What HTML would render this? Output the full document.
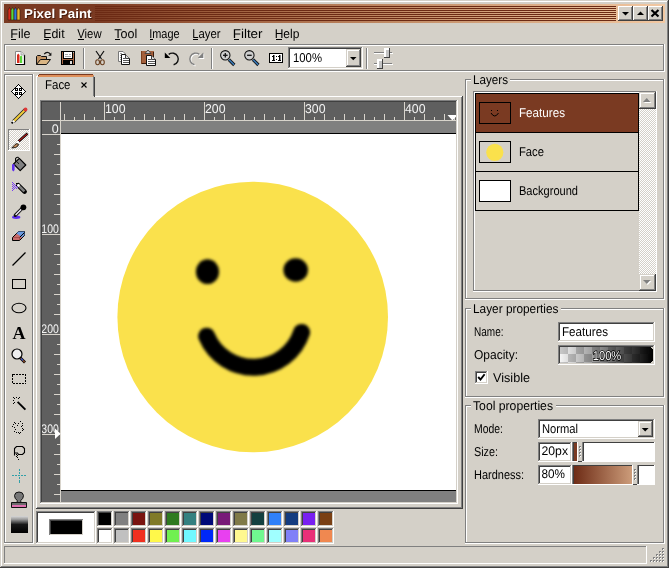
<!DOCTYPE html><html><head><meta charset="utf-8"><style>html,body{margin:0;padding:0;background:#d4d0c8;overflow:hidden}svg{display:block;will-change:transform} rect{shape-rendering:crispEdges}</style></head><body><svg width="669" height="568" viewBox="0 0 669 568" text-rendering="geometricPrecision"><rect x="0" y="0" width="669" height="568" fill="#d4d0c8" />
<rect x="0" y="0" width="668" height="1" fill="#d4d0c8" />
<rect x="0" y="0" width="1" height="567" fill="#d4d0c8" />
<rect x="1" y="1" width="666" height="1" fill="#ffffff" />
<rect x="1" y="1" width="1" height="565" fill="#ffffff" />
<rect x="0" y="567" width="669" height="1" fill="#404040" />
<rect x="668" y="0" width="1" height="568" fill="#404040" />
<rect x="1" y="566" width="667" height="1" fill="#808080" />
<rect x="667" y="1" width="1" height="566" fill="#808080" />
<defs><linearGradient id="tg" x1="0" x2="1" y1="0" y2="0"><stop offset="0" stop-color="#7a3a22"/><stop offset="0.14" stop-color="#7a3a22"/><stop offset="0.3" stop-color="#9a5a3a"/><stop offset="0.6" stop-color="#c28c66"/><stop offset="0.82" stop-color="#dcae88"/><stop offset="1" stop-color="#f2c8a2"/></linearGradient><linearGradient id="hg" x1="0" x2="1"><stop offset="0" stop-color="#6e2c16"/><stop offset="1" stop-color="#cc9c7a"/></linearGradient><linearGradient id="opg" x1="0" x2="1"><stop offset="0" stop-color="#000" stop-opacity="0"/><stop offset="1" stop-color="#000" stop-opacity="1"/></linearGradient><pattern id="dith" width="2" height="2" patternUnits="userSpaceOnUse"><rect width="2" height="2" fill="#d4d0c8"/><rect width="1" height="1" fill="#fff"/><rect x="1" y="1" width="1" height="1" fill="#fff"/></pattern><pattern id="chk" x="560" y="346" width="16" height="16" patternUnits="userSpaceOnUse"><rect width="16" height="16" fill="#f4f4f4"/><rect width="8" height="8" fill="#c8c8c8"/><rect x="8" y="8" width="8" height="8" fill="#c8c8c8"/></pattern><filter id="crisp" x="-5%" y="-20%" width="110%" height="140%"><feComponentTransfer><feFuncA type="discrete" tableValues="0 0 1 1 1"/></feComponentTransfer></filter><filter id="blur" x="-20%" y="-20%" width="140%" height="140%"><feGaussianBlur stdDeviation="1.35"/></filter><clipPath id="hr"><rect x="42" y="102" width="414" height="18"/></clipPath><clipPath id="vr"><rect x="42" y="121" width="18" height="381"/></clipPath></defs>
<rect x="4" y="4" width="661" height="19" fill="url(#tg)" />
<rect x="95" y="6" width="521" height="1" fill="#6c2a14" />
<rect x="95" y="8" width="521" height="1" fill="#6c2a14" />
<rect x="95" y="10" width="521" height="1" fill="#6c2a14" />
<rect x="95" y="12" width="521" height="1" fill="#6c2a14" />
<rect x="95" y="14" width="521" height="1" fill="#6c2a14" />
<rect x="95" y="16" width="521" height="1" fill="#6c2a14" />
<rect x="95" y="18" width="521" height="1" fill="#6c2a14" />
<rect x="95" y="20" width="521" height="1" fill="#6c2a14" />
<path d="M8 20 V10 L9.5 7.5 L11 10 V20 Z" fill="#d82a1c" stroke="#3a1a0a" stroke-width="0.6"/>
<path d="M11 20 V10 L12.5 7.5 L14 10 V20 Z" fill="#5ad83a" stroke="#3a1a0a" stroke-width="0.6"/>
<path d="M14 20 V10 L15.5 7.5 L17 10 V20 Z" fill="#2a7ae0" stroke="#3a1a0a" stroke-width="0.6"/>
<path d="M17 20 V10 L18.5 7.5 L20 10 V20 Z" fill="#e8b830" stroke="#3a1a0a" stroke-width="0.6"/>
<text x="25" y="19" font-family="Liberation Sans" font-size="12.8" font-weight="bold" fill="#3a1408" text-anchor="start" textLength="67.5" lengthAdjust="spacingAndGlyphs" opacity="0.8">Pixel Paint</text>
<text x="24" y="18" font-family="Liberation Sans" font-size="12.8" font-weight="bold" fill="#fff" text-anchor="start" textLength="67.5" lengthAdjust="spacingAndGlyphs" >Pixel Paint</text>
<rect x="618" y="6" width="15" height="15" fill="#d4d0c8" />
<rect x="618" y="6" width="15" height="1" fill="#ffffff" />
<rect x="618" y="6" width="1" height="15" fill="#ffffff" />
<rect x="618" y="20" width="15" height="1" fill="#404040" />
<rect x="632" y="6" width="1" height="15" fill="#404040" />
<rect x="619" y="7" width="13" height="1" fill="#ffffff" />
<rect x="619" y="7" width="1" height="13" fill="#ffffff" />
<rect x="619" y="19" width="13" height="1" fill="#808080" />
<rect x="631" y="7" width="1" height="13" fill="#808080" />
<rect x="619" y="7" width="13" height="1" fill="#d4d0c8" />
<rect x="619" y="7" width="1" height="13" fill="#d4d0c8" />
<rect x="619" y="19" width="13" height="1" fill="#808080" />
<rect x="631" y="7" width="1" height="13" fill="#808080" />
<rect x="633" y="6" width="15" height="15" fill="#d4d0c8" />
<rect x="633" y="6" width="15" height="1" fill="#ffffff" />
<rect x="633" y="6" width="1" height="15" fill="#ffffff" />
<rect x="633" y="20" width="15" height="1" fill="#404040" />
<rect x="647" y="6" width="1" height="15" fill="#404040" />
<rect x="634" y="7" width="13" height="1" fill="#ffffff" />
<rect x="634" y="7" width="1" height="13" fill="#ffffff" />
<rect x="634" y="19" width="13" height="1" fill="#808080" />
<rect x="646" y="7" width="1" height="13" fill="#808080" />
<rect x="634" y="7" width="13" height="1" fill="#d4d0c8" />
<rect x="634" y="7" width="1" height="13" fill="#d4d0c8" />
<rect x="634" y="19" width="13" height="1" fill="#808080" />
<rect x="646" y="7" width="1" height="13" fill="#808080" />
<rect x="648" y="6" width="15" height="15" fill="#d4d0c8" />
<rect x="648" y="6" width="15" height="1" fill="#ffffff" />
<rect x="648" y="6" width="1" height="15" fill="#ffffff" />
<rect x="648" y="20" width="15" height="1" fill="#404040" />
<rect x="662" y="6" width="1" height="15" fill="#404040" />
<rect x="649" y="7" width="13" height="1" fill="#ffffff" />
<rect x="649" y="7" width="1" height="13" fill="#ffffff" />
<rect x="649" y="19" width="13" height="1" fill="#808080" />
<rect x="661" y="7" width="1" height="13" fill="#808080" />
<rect x="649" y="7" width="13" height="1" fill="#d4d0c8" />
<rect x="649" y="7" width="1" height="13" fill="#d4d0c8" />
<rect x="649" y="19" width="13" height="1" fill="#808080" />
<rect x="661" y="7" width="1" height="13" fill="#808080" />
<path d="M622 12 H629 L625.5 15.5 Z" fill="#000"/>
<path d="M637 15 H644 L640.5 11.5 Z" fill="#000"/>
<path d="M651.5 10 L658.5 16.5 M658.5 10 L651.5 16.5" stroke="#000" stroke-width="2.2"/>
<text x="10.2" y="38" font-family="Liberation Sans" font-size="12.8" font-weight="normal" fill="#000" text-anchor="start" textLength="20.4" lengthAdjust="spacingAndGlyphs" >File</text>
<rect x="11" y="39" width="5" height="1" fill="#000" />
<text x="43.2" y="38" font-family="Liberation Sans" font-size="12.8" font-weight="normal" fill="#000" text-anchor="start" textLength="21.4" lengthAdjust="spacingAndGlyphs" >Edit</text>
<rect x="44" y="39" width="5" height="1" fill="#000" />
<text x="77.2" y="38" font-family="Liberation Sans" font-size="12.8" font-weight="normal" fill="#000" text-anchor="start" textLength="24.4" lengthAdjust="spacingAndGlyphs" >View</text>
<rect x="78" y="39" width="6" height="1" fill="#000" />
<text x="114.2" y="38" font-family="Liberation Sans" font-size="12.8" font-weight="normal" fill="#000" text-anchor="start" textLength="23.0" lengthAdjust="spacingAndGlyphs" >Tool</text>
<rect x="115" y="39" width="5" height="1" fill="#000" />
<text x="149.2" y="38" font-family="Liberation Sans" font-size="12.8" font-weight="normal" fill="#000" text-anchor="start" textLength="30.4" lengthAdjust="spacingAndGlyphs" >Image</text>
<rect x="150" y="39" width="3" height="1" fill="#000" />
<text x="192.2" y="38" font-family="Liberation Sans" font-size="12.8" font-weight="normal" fill="#000" text-anchor="start" textLength="28.4" lengthAdjust="spacingAndGlyphs" >Layer</text>
<rect x="193" y="39" width="5" height="1" fill="#000" />
<text x="232.7" y="38" font-family="Liberation Sans" font-size="12.8" font-weight="normal" fill="#000" text-anchor="start" textLength="29.9" lengthAdjust="spacingAndGlyphs" >Filter</text>
<rect x="234" y="39" width="5" height="1" fill="#000" />
<text x="274.7" y="38" font-family="Liberation Sans" font-size="12.8" font-weight="normal" fill="#000" text-anchor="start" textLength="24.7" lengthAdjust="spacingAndGlyphs" >Help</text>
<rect x="276" y="39" width="6" height="1" fill="#000" />
<rect x="4" y="44" width="661" height="1" fill="#808080" />
<rect x="4" y="44" width="1" height="28" fill="#808080" />
<rect x="4" y="71" width="661" height="1" fill="#ffffff" />
<rect x="664" y="44" width="1" height="28" fill="#ffffff" />
<rect x="5" y="45" width="659" height="1" fill="#ffffff" />
<rect x="5" y="45" width="1" height="26" fill="#ffffff" />
<rect x="5" y="70" width="659" height="1" fill="#808080" />
<rect x="663" y="45" width="1" height="26" fill="#808080" />
<rect x="83" y="48" width="1" height="21" fill="#808080" />
<rect x="84" y="48" width="1" height="21" fill="#ffffff" />
<rect x="211" y="48" width="1" height="21" fill="#808080" />
<rect x="212" y="48" width="1" height="21" fill="#ffffff" />
<rect x="366" y="48" width="1" height="21" fill="#808080" />
<rect x="367" y="48" width="1" height="21" fill="#ffffff" />
<path d="M15.5 51.5 H21 L24.5 55 V64.5 H15.5 Z" fill="#fff" stroke="#888" stroke-width="1"/>
<path d="M24.5 55 V64.5 H15.5" fill="none" stroke="#000" stroke-width="1.2"/>
<path d="M21 51.5 V55 H24.5" fill="#ddd" stroke="#999" stroke-width="0.8"/>
<path d="M17 63 V55 L18.2 53.5 L19.5 55 V63 Z" fill="#d82a1c"/>
<path d="M20 63 V56.5 L21 55.5 L22.2 56.5 V63 Z" fill="#5ad83a"/>
<path d="M36.5 64.5 V56.5 L37.5 55.5 H40.5 L41.5 56.5 H46.5 V59.5" fill="#c49464" stroke="#111" stroke-width="1"/>
<path d="M36.5 64.5 L40.5 59.5 H50.5 L46.5 64.5 Z" fill="#dab684" stroke="#111" stroke-width="1"/>
<path d="M44.2 54.2 Q47 50.8 50.2 53.8" fill="none" stroke="#111" stroke-width="1.2"/><path d="M48.2 55.8 H51.4 V52.4 Z" fill="#111"/>
<rect x="61" y="51" width="14" height="14" fill="#000" />
<rect x="64" y="52" width="8" height="6" fill="#fff" />
<rect x="65" y="54" width="3" height="1" fill="#aaa" />
<rect x="69" y="54" width="2" height="1" fill="#aaa" />
<rect x="65" y="56" width="6" height="1" fill="#aaa" />
<rect x="62" y="52" width="1" height="12" fill="#a86a48" />
<rect x="73" y="53" width="1" height="11" fill="#a86a48" />
<rect x="62" y="59" width="12" height="1" fill="#a86a48" />
<rect x="70" y="61" width="2" height="3" fill="#ddd" />
<rect x="73" y="52" width="1" height="1" fill="#bbb" />
<path d="M96 51 L101.5 59 M104 51 L98.5 59" stroke="#111" stroke-width="1.2"/>
<ellipse cx="97.6" cy="62.3" rx="1.9" ry="2.5" fill="none" stroke="#6a4020" stroke-width="1.1"/><ellipse cx="102.4" cy="62.3" rx="1.9" ry="2.5" fill="none" stroke="#6a4020" stroke-width="1.1"/>
<path d="M118.5 51.5 H123 L125.5 54 V61.5 H118.5 Z" fill="#fff" stroke="#777" stroke-width="1"/>
<rect x="120" y="53" width="2" height="1" fill="#999" />
<rect x="120" y="55" width="2" height="1" fill="#999" />
<rect x="120" y="57" width="2" height="1" fill="#999" />
<rect x="120" y="59" width="2" height="1" fill="#999" />
<path d="M121.5 54.5 H125.5 L129.5 58.5 V64.5 H121.5 Z" fill="#fff" stroke="#111" stroke-width="1"/>
<path d="M125.5 54.5 V58.5 H129.5" fill="#ddd" stroke="#111" stroke-width="0.8"/>
<rect x="123" y="58" width="2" height="1" fill="#555" />
<rect x="123" y="60" width="6" height="1" fill="#555" />
<rect x="123" y="62" width="6" height="1" fill="#555" />
<rect x="141" y="51" width="13" height="13" fill="#a4603c" />
<rect x="153" y="52" width="1" height="12" fill="#3a1a08" />
<rect x="142" y="63" width="12" height="1" fill="#3a1a08" />
<rect x="141" y="51" width="1" height="13" fill="#7a4020" />
<path d="M145 53.5 H151 L148 50 Z" fill="#d0d0d0" stroke="#333" stroke-width="0.8"/>
<path d="M146.5 55.5 H151.5 L155.5 59.5 V65.5 H146.5 Z" fill="#fff" stroke="#111" stroke-width="1"/>
<path d="M151.5 55.5 V59.5 H155.5" fill="#ddd" stroke="#111" stroke-width="0.8"/>
<rect x="148" y="59" width="3" height="1" fill="#555" />
<rect x="148" y="61" width="7" height="1" fill="#555" />
<rect x="148" y="63" width="7" height="1" fill="#555" />
<path d="M168.7 54.4 A5.9 5.9 0 1 1 173.6 64.8" fill="none" stroke="#111" stroke-width="1.4"/><path d="M164.8 52.5 V58 H170.3 Z" fill="#000"/>
<g transform="translate(0.9,0.9)"><path d="M199.4 54.4 A5.9 5.9 0 1 0 194.5 64.8" fill="none" stroke="#fff" stroke-width="1.4"/><path d="M203.3 52.5 V58 H197.8 Z" fill="#fff"/></g>
<path d="M199.4 54.4 A5.9 5.9 0 1 0 194.5 64.8" fill="none" stroke="#808080" stroke-width="1.4"/><path d="M203.3 52.5 V58 H197.8 Z" fill="#808080"/>
<path d="M228.9 59.6 L234.3 65" stroke="#111" stroke-width="3.2"/><path d="M229.10000000000002 59.8 L234.10000000000002 64.8" stroke="#3a7ab8" stroke-width="1.6"/>
<circle cx="225.3" cy="55.3" r="4.7" fill="#cfcfcf" stroke="#111" stroke-width="1.05"/>
<path d="M223.0 55.3 H227.60000000000002" stroke="#111" stroke-width="1.3"/>
<path d="M225.3 53 V57.6" stroke="#111" stroke-width="1.3"/>
<path d="M253.0 59.6 L258.4 65" stroke="#111" stroke-width="3.2"/><path d="M253.20000000000002 59.8 L258.2 64.8" stroke="#3a7ab8" stroke-width="1.6"/>
<circle cx="249.4" cy="55.3" r="4.7" fill="#cfcfcf" stroke="#111" stroke-width="1.05"/>
<path d="M247.1 55.3 H251.70000000000002" stroke="#111" stroke-width="1.3"/>
<rect x="269" y="53" width="14" height="10" fill="#fff" />
<rect x="269" y="53" width="14" height="1" fill="#000" />
<rect x="269" y="53" width="1" height="10" fill="#000" />
<rect x="269" y="62" width="14" height="1" fill="#000" />
<rect x="282" y="53" width="1" height="10" fill="#000" />
<rect x="273" y="55" width="1" height="6" fill="#000" />
<rect x="274" y="55" width="1" height="5" fill="#888" />
<rect x="272" y="56" width="1" height="1" fill="#000" />
<rect x="272" y="60" width="3" height="1" fill="#000" />
<rect x="279" y="55" width="1" height="6" fill="#000" />
<rect x="280" y="55" width="1" height="5" fill="#888" />
<rect x="278" y="56" width="1" height="1" fill="#000" />
<rect x="278" y="60" width="3" height="1" fill="#000" />
<rect x="276" y="56" width="1" height="1" fill="#000" />
<rect x="276" y="59" width="1" height="1" fill="#000" />
<rect x="288" y="47" width="75" height="22" fill="#fff" />
<rect x="288" y="47" width="75" height="1" fill="#808080" />
<rect x="288" y="47" width="1" height="22" fill="#808080" />
<rect x="288" y="68" width="75" height="1" fill="#ffffff" />
<rect x="362" y="47" width="1" height="22" fill="#ffffff" />
<rect x="289" y="48" width="73" height="1" fill="#404040" />
<rect x="289" y="48" width="1" height="20" fill="#404040" />
<rect x="289" y="67" width="73" height="1" fill="#d4d0c8" />
<rect x="361" y="48" width="1" height="20" fill="#d4d0c8" />
<rect x="346" y="49" width="15" height="18" fill="#d4d0c8" />
<rect x="346" y="49" width="15" height="1" fill="#d4d0c8" />
<rect x="346" y="49" width="1" height="18" fill="#d4d0c8" />
<rect x="346" y="66" width="15" height="1" fill="#404040" />
<rect x="360" y="49" width="1" height="18" fill="#404040" />
<rect x="347" y="50" width="13" height="1" fill="#ffffff" />
<rect x="347" y="50" width="1" height="16" fill="#ffffff" />
<rect x="347" y="65" width="13" height="1" fill="#808080" />
<rect x="359" y="50" width="1" height="16" fill="#808080" />
<path d="M350 57 H356.5 L353.25 60.2 Z" fill="#000"/>
<text x="293" y="62" font-family="Liberation Sans" font-size="12.8" font-weight="normal" fill="#000" text-anchor="start" textLength="29" lengthAdjust="spacingAndGlyphs" >100%</text>
<rect x="374" y="52" width="18" height="1" fill="#808080" />
<rect x="374" y="53" width="19" height="1" fill="#ffffff" />
<rect x="373" y="52" width="1" height="2" fill="#d4d0c8" />
<rect x="374" y="63" width="18" height="1" fill="#808080" />
<rect x="374" y="64" width="19" height="1" fill="#ffffff" />
<rect x="384" y="48" width="6" height="10" fill="#b8b8b8" />
<rect x="384" y="48" width="6" height="1" fill="#ffffff" />
<rect x="384" y="48" width="1" height="10" fill="#ffffff" />
<rect x="384" y="57" width="6" height="1" fill="#404040" />
<rect x="389" y="48" width="1" height="10" fill="#404040" />
<rect x="385" y="49" width="4" height="1" fill="#ffffff" />
<rect x="385" y="49" width="1" height="8" fill="#ffffff" />
<rect x="385" y="56" width="4" height="1" fill="#808080" />
<rect x="388" y="49" width="1" height="8" fill="#808080" />
<rect x="377" y="59" width="6" height="10" fill="#b8b8b8" />
<rect x="377" y="59" width="6" height="1" fill="#ffffff" />
<rect x="377" y="59" width="1" height="10" fill="#ffffff" />
<rect x="377" y="68" width="6" height="1" fill="#404040" />
<rect x="382" y="59" width="1" height="10" fill="#404040" />
<rect x="378" y="60" width="4" height="1" fill="#ffffff" />
<rect x="378" y="60" width="1" height="8" fill="#ffffff" />
<rect x="378" y="67" width="4" height="1" fill="#808080" />
<rect x="381" y="60" width="1" height="8" fill="#808080" />
<rect x="385" y="49" width="4" height="8" fill="#c4c4c4" />
<rect x="378" y="60" width="4" height="8" fill="#c4c4c4" />
<rect x="385" y="49" width="4" height="1" fill="#ffffff" />
<rect x="385" y="49" width="1" height="8" fill="#ffffff" />
<rect x="378" y="60" width="4" height="1" fill="#ffffff" />
<rect x="378" y="60" width="1" height="8" fill="#ffffff" />
<rect x="4" y="74" width="30" height="1" fill="#808080" />
<rect x="4" y="74" width="1" height="470" fill="#808080" />
<rect x="4" y="543" width="30" height="1" fill="#ffffff" />
<rect x="33" y="74" width="1" height="470" fill="#ffffff" />
<rect x="5" y="75" width="28" height="1" fill="#ffffff" />
<rect x="5" y="75" width="1" height="468" fill="#ffffff" />
<rect x="5" y="542" width="28" height="1" fill="#808080" />
<rect x="32" y="75" width="1" height="468" fill="#808080" />
<rect x="8" y="129" width="22" height="22" fill="url(#dith)" />
<rect x="8" y="129" width="22" height="1" fill="#808080" />
<rect x="8" y="129" width="1" height="22" fill="#808080" />
<rect x="8" y="150" width="22" height="1" fill="#ffffff" />
<rect x="29" y="129" width="1" height="22" fill="#ffffff" />
<rect x="18" y="84" width="1" height="1" fill="#000" />
<rect x="18" y="84" width="1" height="1" fill="#000" />
<rect x="17" y="85" width="3" height="1" fill="#fff" />
<rect x="17" y="85" width="1" height="1" fill="#000" />
<rect x="19" y="85" width="1" height="1" fill="#000" />
<rect x="16" y="86" width="5" height="1" fill="#fff" />
<rect x="16" y="86" width="1" height="1" fill="#000" />
<rect x="20" y="86" width="1" height="1" fill="#000" />
<rect x="15" y="87" width="7" height="1" fill="#fff" />
<rect x="15" y="87" width="1" height="1" fill="#000" />
<rect x="21" y="87" width="1" height="1" fill="#000" />
<rect x="14" y="88" width="9" height="1" fill="#fff" />
<rect x="14" y="88" width="1" height="1" fill="#000" />
<rect x="22" y="88" width="1" height="1" fill="#000" />
<rect x="13" y="89" width="11" height="1" fill="#fff" />
<rect x="13" y="89" width="1" height="1" fill="#000" />
<rect x="23" y="89" width="1" height="1" fill="#000" />
<rect x="12" y="90" width="13" height="1" fill="#fff" />
<rect x="12" y="90" width="1" height="1" fill="#000" />
<rect x="24" y="90" width="1" height="1" fill="#000" />
<rect x="11" y="91" width="15" height="1" fill="#fff" />
<rect x="11" y="91" width="1" height="1" fill="#000" />
<rect x="25" y="91" width="1" height="1" fill="#000" />
<rect x="12" y="92" width="13" height="1" fill="#fff" />
<rect x="12" y="92" width="1" height="1" fill="#000" />
<rect x="24" y="92" width="1" height="1" fill="#000" />
<rect x="13" y="93" width="11" height="1" fill="#fff" />
<rect x="13" y="93" width="1" height="1" fill="#000" />
<rect x="23" y="93" width="1" height="1" fill="#000" />
<rect x="14" y="94" width="9" height="1" fill="#fff" />
<rect x="14" y="94" width="1" height="1" fill="#000" />
<rect x="22" y="94" width="1" height="1" fill="#000" />
<rect x="15" y="95" width="7" height="1" fill="#fff" />
<rect x="15" y="95" width="1" height="1" fill="#000" />
<rect x="21" y="95" width="1" height="1" fill="#000" />
<rect x="16" y="96" width="5" height="1" fill="#fff" />
<rect x="16" y="96" width="1" height="1" fill="#000" />
<rect x="20" y="96" width="1" height="1" fill="#000" />
<rect x="17" y="97" width="3" height="1" fill="#fff" />
<rect x="17" y="97" width="1" height="1" fill="#000" />
<rect x="19" y="97" width="1" height="1" fill="#000" />
<rect x="18" y="98" width="1" height="1" fill="#000" />
<rect x="18" y="98" width="1" height="1" fill="#000" />
<rect x="15" y="88" width="3" height="3" fill="#000" />
<rect x="16" y="89" width="1" height="1" fill="#fff" />
<rect x="19" y="88" width="3" height="3" fill="#000" />
<rect x="20" y="89" width="1" height="1" fill="#fff" />
<rect x="15" y="92" width="3" height="3" fill="#000" />
<rect x="16" y="93" width="1" height="1" fill="#fff" />
<rect x="19" y="92" width="3" height="3" fill="#000" />
<rect x="20" y="93" width="1" height="1" fill="#fff" />
<path d="M13.5 121.5 L25.3 109.7" stroke="#222" stroke-width="3.6"/>
<path d="M13.8 121.2 L25 110" stroke="#f2cc3a" stroke-width="2"/>
<circle cx="25.5" cy="109.5" r="1.9" fill="#e03838"/>
<path d="M11.8 123.2 L14.3 120.7" stroke="#fff" stroke-width="2"/>
<path d="M11.6 123.4 L12.9 122.1" stroke="#000" stroke-width="2"/>
<path d="M18.5 141.5 L27.5 133.5" stroke="#000" stroke-width="2.4"/>
<path d="M18.8 141.2 L27.2 133.8" stroke="#c02020" stroke-width="1.1"/>
<circle cx="18" cy="142.3" r="1.3" fill="#fff"/>
<path d="M11.8 148 L15 144.5 Q17 142.8 18.5 144.3 Q18.5 146.5 15.5 147.5 Z" fill="#c08858" stroke="#000" stroke-width="0.8"/>
<path d="M19.3 158.3 L25.8 165 L20.2 170.6 L13.6 164 Z" fill="#808080" stroke="#000" stroke-width="1.15" stroke-linejoin="round"/>
<path d="M15.6 161.8 V158.6 Q16.6 156.6 18.8 157.6" fill="none" stroke="#000" stroke-width="1.1"/>
<path d="M17.2 162.1 L18.9 163.7" stroke="#000" stroke-width="1"/>
<path d="M12 164.3 H14.6 V170 L13.4 171.6 L12 170 Z" fill="#6030f0"/>
<path d="M18.3 185.3 L24.6 191.6" stroke="#000" stroke-width="4.6" stroke-linecap="round"/>
<path d="M18.6 185.6 L24.4 191.4" stroke="#808080" stroke-width="2.6"/>
<circle cx="18.4" cy="185.4" r="1.4" fill="#fff"/>
<rect x="16" y="183" width="2" height="1" fill="#000" />
<rect x="12" y="182" width="1" height="1" fill="#7a40f0" />
<rect x="12" y="184" width="1" height="1" fill="#7a40f0" />
<rect x="12" y="186" width="1" height="1" fill="#7a40f0" />
<rect x="12" y="188" width="1" height="1" fill="#7a40f0" />
<rect x="12" y="190" width="1" height="1" fill="#7a40f0" />
<rect x="13" y="183" width="1" height="1" fill="#7a40f0" />
<rect x="13" y="185" width="1" height="1" fill="#7a40f0" />
<rect x="13" y="187" width="1" height="1" fill="#7a40f0" />
<rect x="13" y="189" width="1" height="1" fill="#7a40f0" />
<rect x="14" y="184" width="1" height="1" fill="#7a40f0" />
<rect x="14" y="186" width="1" height="1" fill="#7a40f0" />
<rect x="14" y="188" width="1" height="1" fill="#7a40f0" />
<rect x="15" y="185" width="1" height="1" fill="#7a40f0" />
<rect x="15" y="187" width="1" height="1" fill="#7a40f0" />
<rect x="16" y="186" width="1" height="1" fill="#7a40f0" />
<rect x="16" y="188" width="1" height="1" fill="#7a40f0" />
<rect x="17" y="187" width="1" height="1" fill="#7a40f0" />
<ellipse cx="16.2" cy="217.2" rx="4.2" ry="1.7" fill="#6030f0"/>
<path d="M15.3 215.2 L21.6 208.9" stroke="#111" stroke-width="3.4" stroke-linecap="round"/>
<path d="M15.6 214.9 L21.3 209.2" stroke="#f0ecf8" stroke-width="1.4"/>
<circle cx="23.4" cy="207.3" r="2.9" fill="#000"/>
<path d="M12.5 237.5 L18.5 231.5 H24.5 V235.5 L19.5 240.5 H12.5 Z" fill="#c86c6c" stroke="#000" stroke-width="1"/>
<path d="M16.5 233.5 L18.5 231.5 H24.5 V235 L22 237.5 L20 236 Z" fill="#6a9ae0"/>
<path d="M19.5 237.5 L24.5 232.5" fill="none" stroke="#000" stroke-width="1"/><path d="M12.8 237.5 H19.5 V240" fill="none" stroke="#a04848" stroke-width="0.8"/>
<path d="M12.5 265.5 L25.5 252.5" stroke="#000" stroke-width="1.3"/>
<rect x="12.5" y="279.5" width="13" height="9" fill="none" stroke="#000" stroke-width="1"/>
<ellipse cx="19" cy="308" rx="7" ry="4.8" fill="none" stroke="#000" stroke-width="1.1"/>
<text x="19" y="338.5" font-family="Liberation Serif" font-size="18" font-weight="bold" fill="#000" text-anchor="middle" >A</text>
<path d="M20 357.5 L25 362.5" stroke="#000" stroke-width="2.8"/><path d="M20.3 357.8 L24.7 362.2" stroke="#8a4a2a" stroke-width="1.3"/>
<path d="M21 358.5 L23 360.5" stroke="#3050c0" stroke-width="1.3"/>
<circle cx="17" cy="354" r="5" fill="#eee" stroke="#000" stroke-width="1.2"/>
<rect x="12.5" y="374.5" width="13" height="9" fill="none" stroke="#000" stroke-width="1.2" stroke-dasharray="2 1"/>
<rect x="13" y="397" width="1" height="1" fill="#000" />
<rect x="14" y="398" width="1" height="1" fill="#000" />
<rect x="16" y="397" width="1" height="1" fill="#000" />
<rect x="19" y="397" width="1" height="1" fill="#000" />
<rect x="18" y="398" width="1" height="1" fill="#000" />
<rect x="13" y="400" width="1" height="1" fill="#000" />
<rect x="14" y="402" width="1" height="1" fill="#000" />
<rect x="13" y="403" width="1" height="1" fill="#000" />
<path d="M17.6 401.8 L25.4 409.6" stroke="#000" stroke-width="1.9"/>
<rect x="20" y="421" width="1" height="1" fill="#000" />
<rect x="14" y="422" width="1" height="1" fill="#000" />
<rect x="15" y="423" width="1" height="1" fill="#000" />
<rect x="18" y="423" width="1" height="1" fill="#000" />
<rect x="22" y="423" width="1" height="1" fill="#000" />
<rect x="13" y="424" width="1" height="1" fill="#000" />
<rect x="17" y="425" width="1" height="1" fill="#000" />
<rect x="22" y="425" width="1" height="1" fill="#000" />
<rect x="21" y="426" width="1" height="1" fill="#000" />
<rect x="12" y="426" width="1" height="1" fill="#000" />
<rect x="14" y="427" width="1" height="1" fill="#000" />
<rect x="22" y="428" width="1" height="1" fill="#000" />
<rect x="23" y="429" width="1" height="1" fill="#000" />
<rect x="15" y="429" width="1" height="1" fill="#000" />
<rect x="22" y="430" width="1" height="1" fill="#000" />
<rect x="14" y="431" width="1" height="1" fill="#000" />
<rect x="16" y="432" width="1" height="1" fill="#000" />
<rect x="18" y="432" width="1" height="1" fill="#000" />
<rect x="20" y="432" width="1" height="1" fill="#000" />
<rect x="19" y="433" width="1" height="1" fill="#000" />
<path d="M14.5 455.5 V448.5 L16.5 446.5 H22.5 L24.5 448.5 V452.5 L22.5 454.5 H18.5 L17.5 453 H14.5" fill="none" stroke="#000" stroke-width="1.1"/>
<rect x="16" y="454" width="1" height="1" fill="#000" />
<rect x="17" y="455" width="1" height="1" fill="#000" />
<rect x="16" y="456" width="1" height="1" fill="#000" />
<rect x="17" y="457" width="1" height="1" fill="#000" />
<rect x="18" y="459" width="1" height="1" fill="#000" />
<rect x="12" y="475" width="2" height="1" fill="#30a0a8" />
<rect x="15" y="475" width="2" height="1" fill="#30a0a8" />
<rect x="18" y="475" width="2" height="1" fill="#30a0a8" />
<rect x="21" y="475" width="2" height="1" fill="#30a0a8" />
<rect x="24" y="475" width="2" height="1" fill="#30a0a8" />
<rect x="19" y="469" width="1" height="2" fill="#30a0a8" />
<rect x="19" y="472" width="1" height="2" fill="#30a0a8" />
<rect x="19" y="477" width="1" height="2" fill="#30a0a8" />
<rect x="19" y="480" width="1" height="2" fill="#30a0a8" />
<rect x="19" y="482" width="1" height="1" fill="#30a0a8" />
<path d="M17.2 502.5 V500.5 Q14.5 498.5 14.5 495.5 Q14.8 492 19 492 Q23.2 492 23.5 495.5 Q23.5 498.5 20.8 500.5 V502.5 Z" fill="#777" stroke="#111" stroke-width="1"/>
<path d="M11.5 502.5 H26.5 V507.5 H11.5 Z" fill="#6c6c6c" stroke="#111" stroke-width="1"/>
<rect x="12" y="505" width="14" height="2" fill="#e070b0" />
<defs><linearGradient id="gg" x1="0" y1="0" x2="0" y2="1"><stop offset="0" stop-color="#d8d8d8"/><stop offset="0.2" stop-color="#9a9a9a"/><stop offset="0.5" stop-color="#181818"/><stop offset="1" stop-color="#000"/></linearGradient></defs>
<rect x="11" y="516" width="17" height="17" fill="url(#gg)" />
<rect x="36" y="96" width="427" height="1" fill="#ffffff" />
<rect x="36" y="96" width="1" height="413" fill="#ffffff" />
<rect x="461" y="97" width="1" height="411" fill="#808080" />
<rect x="462" y="96" width="1" height="413" fill="#404040" />
<rect x="37" y="507" width="425" height="1" fill="#808080" />
<rect x="36" y="508" width="427" height="1" fill="#404040" />
<rect x="37" y="76" width="57" height="21" fill="#d4d0c8" />
<rect x="36" y="76" width="1" height="21" fill="#ffffff" />
<rect x="39" y="74" width="54" height="1" fill="#7a3a22" />
<rect x="38" y="75" width="56" height="2" fill="#e0905a"/>
<rect x="37" y="75" width="2" height="1" fill="#7a3a22" />
<rect x="37" y="75" width="1" height="2" fill="#ffffff" />
<rect x="93" y="76" width="1" height="20" fill="#808080" />
<rect x="94" y="77" width="1" height="20" fill="#404040" />
<rect x="37" y="96" width="57" height="1" fill="#d4d0c8" />
<text x="45" y="89" font-family="Liberation Sans" font-size="12.8" font-weight="normal" fill="#000" text-anchor="start" textLength="25.5" lengthAdjust="spacingAndGlyphs" >Face</text>
<path d="M81.5 82.5 L86.5 87.5 M86.5 82.5 L81.5 87.5" stroke="#000" stroke-width="1.1"/>
<rect x="40" y="100" width="418" height="1" fill="#808080" />
<rect x="40" y="100" width="1" height="404" fill="#808080" />
<rect x="41" y="101" width="416" height="1" fill="#404040" />
<rect x="41" y="101" width="1" height="402" fill="#404040" />
<rect x="40" y="503" width="418" height="1" fill="#ffffff" />
<rect x="457" y="100" width="1" height="404" fill="#ffffff" />
<rect x="41" y="502" width="416" height="1" fill="#d4d0c8" />
<rect x="456" y="101" width="1" height="402" fill="#d4d0c8" />
<rect x="42" y="102" width="414" height="400" fill="#5f5f5f" />
<rect x="61" y="121" width="395" height="381" fill="#808080" />
<rect x="61" y="134" width="395" height="356" fill="#fff" />
<rect x="61" y="133" width="395" height="1" fill="#000" />
<rect x="61" y="490" width="395" height="1" fill="#000" />
<rect x="42" y="120" width="414" height="1" fill="#d8d4cc" />
<rect x="60" y="102" width="1" height="400" fill="#d8d4cc" />
<rect x="64" y="114" width="1" height="6" fill="#d8d4cc" />
<rect x="74" y="117" width="1" height="3" fill="#d8d4cc" />
<rect x="84" y="114" width="1" height="6" fill="#d8d4cc" />
<rect x="94" y="117" width="1" height="3" fill="#d8d4cc" />
<rect x="104" y="102" width="1" height="18" fill="#d8d4cc" />
<rect x="114" y="117" width="1" height="3" fill="#d8d4cc" />
<rect x="124" y="114" width="1" height="6" fill="#d8d4cc" />
<rect x="134" y="117" width="1" height="3" fill="#d8d4cc" />
<rect x="144" y="114" width="1" height="6" fill="#d8d4cc" />
<rect x="154" y="117" width="1" height="3" fill="#d8d4cc" />
<rect x="164" y="114" width="1" height="6" fill="#d8d4cc" />
<rect x="174" y="117" width="1" height="3" fill="#d8d4cc" />
<rect x="184" y="114" width="1" height="6" fill="#d8d4cc" />
<rect x="194" y="117" width="1" height="3" fill="#d8d4cc" />
<rect x="204" y="102" width="1" height="18" fill="#d8d4cc" />
<rect x="214" y="117" width="1" height="3" fill="#d8d4cc" />
<rect x="224" y="114" width="1" height="6" fill="#d8d4cc" />
<rect x="234" y="117" width="1" height="3" fill="#d8d4cc" />
<rect x="244" y="114" width="1" height="6" fill="#d8d4cc" />
<rect x="254" y="117" width="1" height="3" fill="#d8d4cc" />
<rect x="264" y="114" width="1" height="6" fill="#d8d4cc" />
<rect x="274" y="117" width="1" height="3" fill="#d8d4cc" />
<rect x="284" y="114" width="1" height="6" fill="#d8d4cc" />
<rect x="294" y="117" width="1" height="3" fill="#d8d4cc" />
<rect x="304" y="102" width="1" height="18" fill="#d8d4cc" />
<rect x="314" y="117" width="1" height="3" fill="#d8d4cc" />
<rect x="324" y="114" width="1" height="6" fill="#d8d4cc" />
<rect x="334" y="117" width="1" height="3" fill="#d8d4cc" />
<rect x="344" y="114" width="1" height="6" fill="#d8d4cc" />
<rect x="354" y="117" width="1" height="3" fill="#d8d4cc" />
<rect x="364" y="114" width="1" height="6" fill="#d8d4cc" />
<rect x="374" y="117" width="1" height="3" fill="#d8d4cc" />
<rect x="384" y="114" width="1" height="6" fill="#d8d4cc" />
<rect x="394" y="117" width="1" height="3" fill="#d8d4cc" />
<rect x="404" y="102" width="1" height="18" fill="#d8d4cc" />
<rect x="414" y="117" width="1" height="3" fill="#d8d4cc" />
<rect x="424" y="114" width="1" height="6" fill="#d8d4cc" />
<rect x="434" y="117" width="1" height="3" fill="#d8d4cc" />
<rect x="444" y="114" width="1" height="6" fill="#d8d4cc" />
<rect x="454" y="117" width="1" height="3" fill="#d8d4cc" />
<text x="105" y="113" font-family="Liberation Sans" font-size="12.8" font-weight="normal" fill="#f4f4f4" text-anchor="start" textLength="20.5" lengthAdjust="spacingAndGlyphs" >100</text>
<text x="205" y="113" font-family="Liberation Sans" font-size="12.8" font-weight="normal" fill="#f4f4f4" text-anchor="start" textLength="20.5" lengthAdjust="spacingAndGlyphs" >200</text>
<text x="305" y="113" font-family="Liberation Sans" font-size="12.8" font-weight="normal" fill="#f4f4f4" text-anchor="start" textLength="20.5" lengthAdjust="spacingAndGlyphs" >300</text>
<text x="405" y="113" font-family="Liberation Sans" font-size="12.8" font-weight="normal" fill="#f4f4f4" text-anchor="start" textLength="20.5" lengthAdjust="spacingAndGlyphs" >400</text>
<path d="M447.5 115 H457.5 L452.5 120.5 Z" fill="#fff" clip-path="url(#hr)"/>
<rect x="42" y="134" width="18" height="1" fill="#d8d4cc" />
<rect x="57" y="144" width="3" height="1" fill="#d8d4cc" />
<rect x="54" y="154" width="6" height="1" fill="#d8d4cc" />
<rect x="57" y="164" width="3" height="1" fill="#d8d4cc" />
<rect x="54" y="174" width="6" height="1" fill="#d8d4cc" />
<rect x="57" y="184" width="3" height="1" fill="#d8d4cc" />
<rect x="54" y="194" width="6" height="1" fill="#d8d4cc" />
<rect x="57" y="204" width="3" height="1" fill="#d8d4cc" />
<rect x="54" y="214" width="6" height="1" fill="#d8d4cc" />
<rect x="42" y="234" width="18" height="1" fill="#d8d4cc" />
<rect x="57" y="244" width="3" height="1" fill="#d8d4cc" />
<rect x="54" y="254" width="6" height="1" fill="#d8d4cc" />
<rect x="57" y="264" width="3" height="1" fill="#d8d4cc" />
<rect x="54" y="274" width="6" height="1" fill="#d8d4cc" />
<rect x="57" y="284" width="3" height="1" fill="#d8d4cc" />
<rect x="54" y="294" width="6" height="1" fill="#d8d4cc" />
<rect x="57" y="304" width="3" height="1" fill="#d8d4cc" />
<rect x="54" y="314" width="6" height="1" fill="#d8d4cc" />
<rect x="42" y="334" width="18" height="1" fill="#d8d4cc" />
<rect x="57" y="344" width="3" height="1" fill="#d8d4cc" />
<rect x="54" y="354" width="6" height="1" fill="#d8d4cc" />
<rect x="57" y="364" width="3" height="1" fill="#d8d4cc" />
<rect x="54" y="374" width="6" height="1" fill="#d8d4cc" />
<rect x="57" y="384" width="3" height="1" fill="#d8d4cc" />
<rect x="54" y="394" width="6" height="1" fill="#d8d4cc" />
<rect x="57" y="404" width="3" height="1" fill="#d8d4cc" />
<rect x="54" y="414" width="6" height="1" fill="#d8d4cc" />
<rect x="42" y="434" width="18" height="1" fill="#d8d4cc" />
<rect x="57" y="444" width="3" height="1" fill="#d8d4cc" />
<rect x="54" y="454" width="6" height="1" fill="#d8d4cc" />
<rect x="57" y="464" width="3" height="1" fill="#d8d4cc" />
<rect x="54" y="474" width="6" height="1" fill="#d8d4cc" />
<rect x="57" y="484" width="3" height="1" fill="#d8d4cc" />
<rect x="54" y="494" width="6" height="1" fill="#d8d4cc" />
<text x="58.8" y="133" font-family="Liberation Sans" font-size="12.5" font-weight="normal" fill="#f4f4f4" text-anchor="end" clip-path="url(#vr)">0</text>
<text x="58.8" y="233" font-family="Liberation Sans" font-size="12.5" font-weight="normal" fill="#f4f4f4" text-anchor="end" textLength="17.5" lengthAdjust="spacingAndGlyphs" clip-path="url(#vr)">100</text>
<text x="58.8" y="333" font-family="Liberation Sans" font-size="12.5" font-weight="normal" fill="#f4f4f4" text-anchor="end" textLength="17.5" lengthAdjust="spacingAndGlyphs" clip-path="url(#vr)">200</text>
<text x="58.8" y="433" font-family="Liberation Sans" font-size="12.5" font-weight="normal" fill="#f4f4f4" text-anchor="end" textLength="17.5" lengthAdjust="spacingAndGlyphs" clip-path="url(#vr)">300</text>
<path d="M55 428.5 V439 L60.6 433.7 Z" fill="#fff"/>
<circle cx="252.7" cy="317" r="135.3" fill="#fae14c"/>
<g filter="url(#blur)"><ellipse cx="207.5" cy="271.7" rx="11.6" ry="12.4" fill="#000"/><ellipse cx="295.7" cy="270" rx="12.3" ry="11.8" fill="#000"/><path d="M206.7 336.2 A 50.7 50.7 0 0 0 301.6 332.4" fill="none" stroke="#000" stroke-width="17" stroke-linecap="round"/></g>
<rect x="36" y="511" width="60" height="33" fill="#fff" />
<rect x="36" y="511" width="60" height="1" fill="#808080" />
<rect x="36" y="511" width="1" height="33" fill="#808080" />
<rect x="36" y="543" width="60" height="1" fill="#ffffff" />
<rect x="95" y="511" width="1" height="33" fill="#ffffff" />
<rect x="37" y="512" width="58" height="1" fill="#404040" />
<rect x="37" y="512" width="1" height="31" fill="#404040" />
<rect x="37" y="542" width="58" height="1" fill="#d4d0c8" />
<rect x="94" y="512" width="1" height="31" fill="#d4d0c8" />
<rect x="49" y="519" width="35" height="17" fill="#000" />
<rect x="49" y="519" width="35" height="1" fill="#808080" />
<rect x="49" y="519" width="1" height="17" fill="#808080" />
<rect x="49" y="535" width="35" height="1" fill="#ffffff" />
<rect x="83" y="519" width="1" height="17" fill="#ffffff" />
<rect x="50" y="520" width="33" height="1" fill="#404040" />
<rect x="50" y="520" width="1" height="15" fill="#404040" />
<rect x="50" y="534" width="33" height="1" fill="#d4d0c8" />
<rect x="82" y="520" width="1" height="15" fill="#d4d0c8" />
<rect x="97" y="511" width="16" height="16" fill="#000000" />
<rect x="97" y="511" width="16" height="1" fill="#808080" />
<rect x="97" y="511" width="1" height="16" fill="#808080" />
<rect x="97" y="526" width="16" height="1" fill="#ffffff" />
<rect x="112" y="511" width="1" height="16" fill="#ffffff" />
<rect x="98" y="512" width="14" height="1" fill="#404040" />
<rect x="98" y="512" width="1" height="14" fill="#404040" />
<rect x="98" y="525" width="14" height="1" fill="#d4d0c8" />
<rect x="111" y="512" width="1" height="14" fill="#d4d0c8" />
<rect x="97" y="528" width="16" height="16" fill="#ffffff" />
<rect x="97" y="528" width="16" height="1" fill="#808080" />
<rect x="97" y="528" width="1" height="16" fill="#808080" />
<rect x="97" y="543" width="16" height="1" fill="#ffffff" />
<rect x="112" y="528" width="1" height="16" fill="#ffffff" />
<rect x="98" y="529" width="14" height="1" fill="#404040" />
<rect x="98" y="529" width="1" height="14" fill="#404040" />
<rect x="98" y="542" width="14" height="1" fill="#d4d0c8" />
<rect x="111" y="529" width="1" height="14" fill="#d4d0c8" />
<rect x="114" y="511" width="16" height="16" fill="#808080" />
<rect x="114" y="511" width="16" height="1" fill="#808080" />
<rect x="114" y="511" width="1" height="16" fill="#808080" />
<rect x="114" y="526" width="16" height="1" fill="#ffffff" />
<rect x="129" y="511" width="1" height="16" fill="#ffffff" />
<rect x="115" y="512" width="14" height="1" fill="#404040" />
<rect x="115" y="512" width="1" height="14" fill="#404040" />
<rect x="115" y="525" width="14" height="1" fill="#d4d0c8" />
<rect x="128" y="512" width="1" height="14" fill="#d4d0c8" />
<rect x="114" y="528" width="16" height="16" fill="#c0c0c0" />
<rect x="114" y="528" width="16" height="1" fill="#808080" />
<rect x="114" y="528" width="1" height="16" fill="#808080" />
<rect x="114" y="543" width="16" height="1" fill="#ffffff" />
<rect x="129" y="528" width="1" height="16" fill="#ffffff" />
<rect x="115" y="529" width="14" height="1" fill="#404040" />
<rect x="115" y="529" width="1" height="14" fill="#404040" />
<rect x="115" y="542" width="14" height="1" fill="#d4d0c8" />
<rect x="128" y="529" width="1" height="14" fill="#d4d0c8" />
<rect x="131" y="511" width="16" height="16" fill="#7a1410" />
<rect x="131" y="511" width="16" height="1" fill="#808080" />
<rect x="131" y="511" width="1" height="16" fill="#808080" />
<rect x="131" y="526" width="16" height="1" fill="#ffffff" />
<rect x="146" y="511" width="1" height="16" fill="#ffffff" />
<rect x="132" y="512" width="14" height="1" fill="#404040" />
<rect x="132" y="512" width="1" height="14" fill="#404040" />
<rect x="132" y="525" width="14" height="1" fill="#d4d0c8" />
<rect x="145" y="512" width="1" height="14" fill="#d4d0c8" />
<rect x="131" y="528" width="16" height="16" fill="#f03020" />
<rect x="131" y="528" width="16" height="1" fill="#808080" />
<rect x="131" y="528" width="1" height="16" fill="#808080" />
<rect x="131" y="543" width="16" height="1" fill="#ffffff" />
<rect x="146" y="528" width="1" height="16" fill="#ffffff" />
<rect x="132" y="529" width="14" height="1" fill="#404040" />
<rect x="132" y="529" width="1" height="14" fill="#404040" />
<rect x="132" y="542" width="14" height="1" fill="#d4d0c8" />
<rect x="145" y="529" width="1" height="14" fill="#d4d0c8" />
<rect x="148" y="511" width="16" height="16" fill="#807a28" />
<rect x="148" y="511" width="16" height="1" fill="#808080" />
<rect x="148" y="511" width="1" height="16" fill="#808080" />
<rect x="148" y="526" width="16" height="1" fill="#ffffff" />
<rect x="163" y="511" width="1" height="16" fill="#ffffff" />
<rect x="149" y="512" width="14" height="1" fill="#404040" />
<rect x="149" y="512" width="1" height="14" fill="#404040" />
<rect x="149" y="525" width="14" height="1" fill="#d4d0c8" />
<rect x="162" y="512" width="1" height="14" fill="#d4d0c8" />
<rect x="148" y="528" width="16" height="16" fill="#fff84a" />
<rect x="148" y="528" width="16" height="1" fill="#808080" />
<rect x="148" y="528" width="1" height="16" fill="#808080" />
<rect x="148" y="543" width="16" height="1" fill="#ffffff" />
<rect x="163" y="528" width="1" height="16" fill="#ffffff" />
<rect x="149" y="529" width="14" height="1" fill="#404040" />
<rect x="149" y="529" width="1" height="14" fill="#404040" />
<rect x="149" y="542" width="14" height="1" fill="#d4d0c8" />
<rect x="162" y="529" width="1" height="14" fill="#d4d0c8" />
<rect x="165" y="511" width="16" height="16" fill="#2e7a20" />
<rect x="165" y="511" width="16" height="1" fill="#808080" />
<rect x="165" y="511" width="1" height="16" fill="#808080" />
<rect x="165" y="526" width="16" height="1" fill="#ffffff" />
<rect x="180" y="511" width="1" height="16" fill="#ffffff" />
<rect x="166" y="512" width="14" height="1" fill="#404040" />
<rect x="166" y="512" width="1" height="14" fill="#404040" />
<rect x="166" y="525" width="14" height="1" fill="#d4d0c8" />
<rect x="179" y="512" width="1" height="14" fill="#d4d0c8" />
<rect x="165" y="528" width="16" height="16" fill="#70f050" />
<rect x="165" y="528" width="16" height="1" fill="#808080" />
<rect x="165" y="528" width="1" height="16" fill="#808080" />
<rect x="165" y="543" width="16" height="1" fill="#ffffff" />
<rect x="180" y="528" width="1" height="16" fill="#ffffff" />
<rect x="166" y="529" width="14" height="1" fill="#404040" />
<rect x="166" y="529" width="1" height="14" fill="#404040" />
<rect x="166" y="542" width="14" height="1" fill="#d4d0c8" />
<rect x="179" y="529" width="1" height="14" fill="#d4d0c8" />
<rect x="182" y="511" width="16" height="16" fill="#348080" />
<rect x="182" y="511" width="16" height="1" fill="#808080" />
<rect x="182" y="511" width="1" height="16" fill="#808080" />
<rect x="182" y="526" width="16" height="1" fill="#ffffff" />
<rect x="197" y="511" width="1" height="16" fill="#ffffff" />
<rect x="183" y="512" width="14" height="1" fill="#404040" />
<rect x="183" y="512" width="1" height="14" fill="#404040" />
<rect x="183" y="525" width="14" height="1" fill="#d4d0c8" />
<rect x="196" y="512" width="1" height="14" fill="#d4d0c8" />
<rect x="182" y="528" width="16" height="16" fill="#70f8ff" />
<rect x="182" y="528" width="16" height="1" fill="#808080" />
<rect x="182" y="528" width="1" height="16" fill="#808080" />
<rect x="182" y="543" width="16" height="1" fill="#ffffff" />
<rect x="197" y="528" width="1" height="16" fill="#ffffff" />
<rect x="183" y="529" width="14" height="1" fill="#404040" />
<rect x="183" y="529" width="1" height="14" fill="#404040" />
<rect x="183" y="542" width="14" height="1" fill="#d4d0c8" />
<rect x="196" y="529" width="1" height="14" fill="#d4d0c8" />
<rect x="199" y="511" width="16" height="16" fill="#000a78" />
<rect x="199" y="511" width="16" height="1" fill="#808080" />
<rect x="199" y="511" width="1" height="16" fill="#808080" />
<rect x="199" y="526" width="16" height="1" fill="#ffffff" />
<rect x="214" y="511" width="1" height="16" fill="#ffffff" />
<rect x="200" y="512" width="14" height="1" fill="#404040" />
<rect x="200" y="512" width="1" height="14" fill="#404040" />
<rect x="200" y="525" width="14" height="1" fill="#d4d0c8" />
<rect x="213" y="512" width="1" height="14" fill="#d4d0c8" />
<rect x="199" y="528" width="16" height="16" fill="#0028f8" />
<rect x="199" y="528" width="16" height="1" fill="#808080" />
<rect x="199" y="528" width="1" height="16" fill="#808080" />
<rect x="199" y="543" width="16" height="1" fill="#ffffff" />
<rect x="214" y="528" width="1" height="16" fill="#ffffff" />
<rect x="200" y="529" width="14" height="1" fill="#404040" />
<rect x="200" y="529" width="1" height="14" fill="#404040" />
<rect x="200" y="542" width="14" height="1" fill="#d4d0c8" />
<rect x="213" y="529" width="1" height="14" fill="#d4d0c8" />
<rect x="216" y="511" width="16" height="16" fill="#781a78" />
<rect x="216" y="511" width="16" height="1" fill="#808080" />
<rect x="216" y="511" width="1" height="16" fill="#808080" />
<rect x="216" y="526" width="16" height="1" fill="#ffffff" />
<rect x="231" y="511" width="1" height="16" fill="#ffffff" />
<rect x="217" y="512" width="14" height="1" fill="#404040" />
<rect x="217" y="512" width="1" height="14" fill="#404040" />
<rect x="217" y="525" width="14" height="1" fill="#d4d0c8" />
<rect x="230" y="512" width="1" height="14" fill="#d4d0c8" />
<rect x="216" y="528" width="16" height="16" fill="#e840f0" />
<rect x="216" y="528" width="16" height="1" fill="#808080" />
<rect x="216" y="528" width="1" height="16" fill="#808080" />
<rect x="216" y="543" width="16" height="1" fill="#ffffff" />
<rect x="231" y="528" width="1" height="16" fill="#ffffff" />
<rect x="217" y="529" width="14" height="1" fill="#404040" />
<rect x="217" y="529" width="1" height="14" fill="#404040" />
<rect x="217" y="542" width="14" height="1" fill="#d4d0c8" />
<rect x="230" y="529" width="1" height="14" fill="#d4d0c8" />
<rect x="233" y="511" width="16" height="16" fill="#807a48" />
<rect x="233" y="511" width="16" height="1" fill="#808080" />
<rect x="233" y="511" width="1" height="16" fill="#808080" />
<rect x="233" y="526" width="16" height="1" fill="#ffffff" />
<rect x="248" y="511" width="1" height="16" fill="#ffffff" />
<rect x="234" y="512" width="14" height="1" fill="#404040" />
<rect x="234" y="512" width="1" height="14" fill="#404040" />
<rect x="234" y="525" width="14" height="1" fill="#d4d0c8" />
<rect x="247" y="512" width="1" height="14" fill="#d4d0c8" />
<rect x="233" y="528" width="16" height="16" fill="#fff890" />
<rect x="233" y="528" width="16" height="1" fill="#808080" />
<rect x="233" y="528" width="1" height="16" fill="#808080" />
<rect x="233" y="543" width="16" height="1" fill="#ffffff" />
<rect x="248" y="528" width="1" height="16" fill="#ffffff" />
<rect x="234" y="529" width="14" height="1" fill="#404040" />
<rect x="234" y="529" width="1" height="14" fill="#404040" />
<rect x="234" y="542" width="14" height="1" fill="#d4d0c8" />
<rect x="247" y="529" width="1" height="14" fill="#d4d0c8" />
<rect x="250" y="511" width="16" height="16" fill="#144040" />
<rect x="250" y="511" width="16" height="1" fill="#808080" />
<rect x="250" y="511" width="1" height="16" fill="#808080" />
<rect x="250" y="526" width="16" height="1" fill="#ffffff" />
<rect x="265" y="511" width="1" height="16" fill="#ffffff" />
<rect x="251" y="512" width="14" height="1" fill="#404040" />
<rect x="251" y="512" width="1" height="14" fill="#404040" />
<rect x="251" y="525" width="14" height="1" fill="#d4d0c8" />
<rect x="264" y="512" width="1" height="14" fill="#d4d0c8" />
<rect x="250" y="528" width="16" height="16" fill="#70f890" />
<rect x="250" y="528" width="16" height="1" fill="#808080" />
<rect x="250" y="528" width="1" height="16" fill="#808080" />
<rect x="250" y="543" width="16" height="1" fill="#ffffff" />
<rect x="265" y="528" width="1" height="16" fill="#ffffff" />
<rect x="251" y="529" width="14" height="1" fill="#404040" />
<rect x="251" y="529" width="1" height="14" fill="#404040" />
<rect x="251" y="542" width="14" height="1" fill="#d4d0c8" />
<rect x="264" y="529" width="1" height="14" fill="#d4d0c8" />
<rect x="267" y="511" width="16" height="16" fill="#3080f8" />
<rect x="267" y="511" width="16" height="1" fill="#808080" />
<rect x="267" y="511" width="1" height="16" fill="#808080" />
<rect x="267" y="526" width="16" height="1" fill="#ffffff" />
<rect x="282" y="511" width="1" height="16" fill="#ffffff" />
<rect x="268" y="512" width="14" height="1" fill="#404040" />
<rect x="268" y="512" width="1" height="14" fill="#404040" />
<rect x="268" y="525" width="14" height="1" fill="#d4d0c8" />
<rect x="281" y="512" width="1" height="14" fill="#d4d0c8" />
<rect x="267" y="528" width="16" height="16" fill="#a0ffff" />
<rect x="267" y="528" width="16" height="1" fill="#808080" />
<rect x="267" y="528" width="1" height="16" fill="#808080" />
<rect x="267" y="543" width="16" height="1" fill="#ffffff" />
<rect x="282" y="528" width="1" height="16" fill="#ffffff" />
<rect x="268" y="529" width="14" height="1" fill="#404040" />
<rect x="268" y="529" width="1" height="14" fill="#404040" />
<rect x="268" y="542" width="14" height="1" fill="#d4d0c8" />
<rect x="281" y="529" width="1" height="14" fill="#d4d0c8" />
<rect x="284" y="511" width="16" height="16" fill="#143c80" />
<rect x="284" y="511" width="16" height="1" fill="#808080" />
<rect x="284" y="511" width="1" height="16" fill="#808080" />
<rect x="284" y="526" width="16" height="1" fill="#ffffff" />
<rect x="299" y="511" width="1" height="16" fill="#ffffff" />
<rect x="285" y="512" width="14" height="1" fill="#404040" />
<rect x="285" y="512" width="1" height="14" fill="#404040" />
<rect x="285" y="525" width="14" height="1" fill="#d4d0c8" />
<rect x="298" y="512" width="1" height="14" fill="#d4d0c8" />
<rect x="284" y="528" width="16" height="16" fill="#8080f8" />
<rect x="284" y="528" width="16" height="1" fill="#808080" />
<rect x="284" y="528" width="1" height="16" fill="#808080" />
<rect x="284" y="543" width="16" height="1" fill="#ffffff" />
<rect x="299" y="528" width="1" height="16" fill="#ffffff" />
<rect x="285" y="529" width="14" height="1" fill="#404040" />
<rect x="285" y="529" width="1" height="14" fill="#404040" />
<rect x="285" y="542" width="14" height="1" fill="#d4d0c8" />
<rect x="298" y="529" width="1" height="14" fill="#d4d0c8" />
<rect x="301" y="511" width="16" height="16" fill="#7820f0" />
<rect x="301" y="511" width="16" height="1" fill="#808080" />
<rect x="301" y="511" width="1" height="16" fill="#808080" />
<rect x="301" y="526" width="16" height="1" fill="#ffffff" />
<rect x="316" y="511" width="1" height="16" fill="#ffffff" />
<rect x="302" y="512" width="14" height="1" fill="#404040" />
<rect x="302" y="512" width="1" height="14" fill="#404040" />
<rect x="302" y="525" width="14" height="1" fill="#d4d0c8" />
<rect x="315" y="512" width="1" height="14" fill="#d4d0c8" />
<rect x="301" y="528" width="16" height="16" fill="#e83078" />
<rect x="301" y="528" width="16" height="1" fill="#808080" />
<rect x="301" y="528" width="1" height="16" fill="#808080" />
<rect x="301" y="543" width="16" height="1" fill="#ffffff" />
<rect x="316" y="528" width="1" height="16" fill="#ffffff" />
<rect x="302" y="529" width="14" height="1" fill="#404040" />
<rect x="302" y="529" width="1" height="14" fill="#404040" />
<rect x="302" y="542" width="14" height="1" fill="#d4d0c8" />
<rect x="315" y="529" width="1" height="14" fill="#d4d0c8" />
<rect x="318" y="511" width="16" height="16" fill="#7a4014" />
<rect x="318" y="511" width="16" height="1" fill="#808080" />
<rect x="318" y="511" width="1" height="16" fill="#808080" />
<rect x="318" y="526" width="16" height="1" fill="#ffffff" />
<rect x="333" y="511" width="1" height="16" fill="#ffffff" />
<rect x="319" y="512" width="14" height="1" fill="#404040" />
<rect x="319" y="512" width="1" height="14" fill="#404040" />
<rect x="319" y="525" width="14" height="1" fill="#d4d0c8" />
<rect x="332" y="512" width="1" height="14" fill="#d4d0c8" />
<rect x="318" y="528" width="16" height="16" fill="#f08850" />
<rect x="318" y="528" width="16" height="1" fill="#808080" />
<rect x="318" y="528" width="1" height="16" fill="#808080" />
<rect x="318" y="543" width="16" height="1" fill="#ffffff" />
<rect x="333" y="528" width="1" height="16" fill="#ffffff" />
<rect x="319" y="529" width="14" height="1" fill="#404040" />
<rect x="319" y="529" width="1" height="14" fill="#404040" />
<rect x="319" y="542" width="14" height="1" fill="#d4d0c8" />
<rect x="332" y="529" width="1" height="14" fill="#d4d0c8" />
<rect x="4" y="546" width="643" height="1" fill="#808080" />
<rect x="4" y="546" width="1" height="18" fill="#808080" />
<rect x="4" y="563" width="643" height="1" fill="#ffffff" />
<rect x="646" y="546" width="1" height="18" fill="#ffffff" />
<rect x="662" y="548" width="2" height="2" fill="#808080" />
<rect x="663" y="549" width="1" height="1" fill="#ffffff" />
<rect x="659" y="551" width="2" height="2" fill="#808080" />
<rect x="660" y="552" width="1" height="1" fill="#ffffff" />
<rect x="662" y="551" width="2" height="2" fill="#808080" />
<rect x="663" y="552" width="1" height="1" fill="#ffffff" />
<rect x="656" y="554" width="2" height="2" fill="#808080" />
<rect x="657" y="555" width="1" height="1" fill="#ffffff" />
<rect x="659" y="554" width="2" height="2" fill="#808080" />
<rect x="660" y="555" width="1" height="1" fill="#ffffff" />
<rect x="662" y="554" width="2" height="2" fill="#808080" />
<rect x="663" y="555" width="1" height="1" fill="#ffffff" />
<rect x="653" y="557" width="2" height="2" fill="#808080" />
<rect x="654" y="558" width="1" height="1" fill="#ffffff" />
<rect x="656" y="557" width="2" height="2" fill="#808080" />
<rect x="657" y="558" width="1" height="1" fill="#ffffff" />
<rect x="659" y="557" width="2" height="2" fill="#808080" />
<rect x="660" y="558" width="1" height="1" fill="#ffffff" />
<rect x="662" y="557" width="2" height="2" fill="#808080" />
<rect x="663" y="558" width="1" height="1" fill="#ffffff" />
<rect x="650" y="560" width="2" height="2" fill="#808080" />
<rect x="651" y="561" width="1" height="1" fill="#ffffff" />
<rect x="653" y="560" width="2" height="2" fill="#808080" />
<rect x="654" y="561" width="1" height="1" fill="#ffffff" />
<rect x="656" y="560" width="2" height="2" fill="#808080" />
<rect x="657" y="561" width="1" height="1" fill="#ffffff" />
<rect x="659" y="560" width="2" height="2" fill="#808080" />
<rect x="660" y="561" width="1" height="1" fill="#ffffff" />
<rect x="662" y="560" width="2" height="2" fill="#808080" />
<rect x="663" y="561" width="1" height="1" fill="#ffffff" />
<rect x="465" y="79" width="200" height="1" fill="#808080" />
<rect x="465" y="79" width="1" height="221" fill="#808080" />
<rect x="465" y="299" width="200" height="1" fill="#ffffff" />
<rect x="664" y="79" width="1" height="221" fill="#ffffff" />
<rect x="466" y="80" width="198" height="1" fill="#ffffff" />
<rect x="466" y="80" width="1" height="219" fill="#ffffff" />
<rect x="466" y="298" width="198" height="1" fill="#808080" />
<rect x="663" y="80" width="1" height="219" fill="#808080" />
<rect x="471" y="77" width="39" height="5" fill="#d4d0c8" />
<text x="473" y="84" font-family="Liberation Sans" font-size="12.8" font-weight="normal" fill="#000" text-anchor="start" textLength="35" lengthAdjust="spacingAndGlyphs" >Layers</text>
<rect x="465" y="308" width="200" height="1" fill="#808080" />
<rect x="465" y="308" width="1" height="90" fill="#808080" />
<rect x="465" y="397" width="200" height="1" fill="#ffffff" />
<rect x="664" y="308" width="1" height="90" fill="#ffffff" />
<rect x="466" y="309" width="198" height="1" fill="#ffffff" />
<rect x="466" y="309" width="1" height="88" fill="#ffffff" />
<rect x="466" y="396" width="198" height="1" fill="#808080" />
<rect x="663" y="309" width="1" height="88" fill="#808080" />
<rect x="471" y="306" width="90" height="5" fill="#d4d0c8" />
<text x="473" y="313" font-family="Liberation Sans" font-size="12.8" font-weight="normal" fill="#000" text-anchor="start" textLength="85.5" lengthAdjust="spacingAndGlyphs" >Layer properties</text>
<rect x="465" y="405" width="200" height="1" fill="#808080" />
<rect x="465" y="405" width="1" height="139" fill="#808080" />
<rect x="465" y="543" width="200" height="1" fill="#ffffff" />
<rect x="664" y="405" width="1" height="139" fill="#ffffff" />
<rect x="466" y="406" width="198" height="1" fill="#ffffff" />
<rect x="466" y="406" width="1" height="137" fill="#ffffff" />
<rect x="466" y="542" width="198" height="1" fill="#808080" />
<rect x="663" y="406" width="1" height="137" fill="#808080" />
<rect x="471" y="403" width="85" height="5" fill="#d4d0c8" />
<text x="473" y="410" font-family="Liberation Sans" font-size="12.8" font-weight="normal" fill="#000" text-anchor="start" textLength="80" lengthAdjust="spacingAndGlyphs" >Tool properties</text>
<rect x="473" y="91" width="184" height="1" fill="#808080" />
<rect x="473" y="91" width="1" height="201" fill="#808080" />
<rect x="473" y="291" width="184" height="1" fill="#ffffff" />
<rect x="656" y="91" width="1" height="201" fill="#ffffff" />
<rect x="474" y="92" width="182" height="1" fill="#ffffff" />
<rect x="474" y="92" width="1" height="199" fill="#ffffff" />
<rect x="474" y="290" width="182" height="1" fill="#808080" />
<rect x="655" y="92" width="1" height="199" fill="#808080" />
<rect x="475" y="93" width="180" height="197" fill="#d4d0c8" />
<rect x="475" y="93" width="164" height="40" fill="#7a3a22" />
<rect x="475" y="93" width="164" height="1" fill="#000" />
<rect x="475" y="132" width="164" height="1" fill="#000" />
<rect x="475" y="171" width="164" height="1" fill="#000" />
<rect x="475" y="210" width="164" height="1" fill="#000" />
<rect x="475" y="93" width="1" height="118" fill="#000" />
<rect x="638" y="93" width="1" height="118" fill="#000" />
<rect x="479" y="102" width="32" height="22" fill="#7a3a22" />
<rect x="479" y="102" width="32" height="1" fill="#000" />
<rect x="479" y="102" width="1" height="22" fill="#000" />
<rect x="479" y="123" width="32" height="1" fill="#000" />
<rect x="510" y="102" width="1" height="22" fill="#000" />
<rect x="479" y="141" width="32" height="22" fill="#d4d0c8" />
<rect x="479" y="141" width="32" height="1" fill="#000" />
<rect x="479" y="141" width="1" height="22" fill="#000" />
<rect x="479" y="162" width="32" height="1" fill="#000" />
<rect x="510" y="141" width="1" height="22" fill="#000" />
<rect x="479" y="180" width="32" height="22" fill="#fff" />
<rect x="479" y="180" width="32" height="1" fill="#000" />
<rect x="479" y="180" width="1" height="22" fill="#000" />
<rect x="479" y="201" width="32" height="1" fill="#000" />
<rect x="510" y="180" width="1" height="22" fill="#000" />
<circle cx="494.8" cy="152.3" r="8.6" fill="#fae14c"/>
<rect x="491" y="110" width="1" height="1" fill="#000" />
<rect x="497" y="110" width="1" height="1" fill="#000" />
<path d="M491 113 Q494.7 119 498.5 113" fill="none" stroke="#000" stroke-width="1"/>
<text x="519" y="117" font-family="Liberation Sans" font-size="12.8" font-weight="normal" fill="#fff" text-anchor="start" textLength="46" lengthAdjust="spacingAndGlyphs" >Features</text>
<text x="519" y="156" font-family="Liberation Sans" font-size="12.8" font-weight="normal" fill="#000" text-anchor="start" textLength="25" lengthAdjust="spacingAndGlyphs" >Face</text>
<text x="519" y="195" font-family="Liberation Sans" font-size="12.8" font-weight="normal" fill="#000" text-anchor="start" textLength="59" lengthAdjust="spacingAndGlyphs" >Background</text>
<rect x="639" y="109" width="17" height="165" fill="url(#dith)" />
<rect x="639" y="92" width="17" height="17" fill="#d4d0c8" />
<rect x="639" y="92" width="17" height="1" fill="#d4d0c8" />
<rect x="639" y="92" width="1" height="17" fill="#d4d0c8" />
<rect x="639" y="108" width="17" height="1" fill="#404040" />
<rect x="655" y="92" width="1" height="17" fill="#404040" />
<rect x="640" y="93" width="15" height="1" fill="#ffffff" />
<rect x="640" y="93" width="1" height="15" fill="#ffffff" />
<rect x="640" y="107" width="15" height="1" fill="#808080" />
<rect x="654" y="93" width="1" height="15" fill="#808080" />
<rect x="639" y="274" width="17" height="17" fill="#d4d0c8" />
<rect x="639" y="274" width="17" height="1" fill="#d4d0c8" />
<rect x="639" y="274" width="1" height="17" fill="#d4d0c8" />
<rect x="639" y="290" width="17" height="1" fill="#404040" />
<rect x="655" y="274" width="1" height="17" fill="#404040" />
<rect x="640" y="275" width="15" height="1" fill="#ffffff" />
<rect x="640" y="275" width="1" height="15" fill="#ffffff" />
<rect x="640" y="289" width="15" height="1" fill="#808080" />
<rect x="654" y="275" width="1" height="15" fill="#808080" />
<path d="M640 102 H650 L647 99 Z" fill="none"/>
<path d="M643 102 H650.5 L646.75 98 Z" fill="#fff" transform="translate(1,1)"/><path d="M643 102 H650.5 L646.75 98 Z" fill="#808080"/>
<path d="M643 280 H650.5 L646.75 284 Z" fill="#fff" transform="translate(1,1)"/><path d="M643 280 H650.5 L646.75 284 Z" fill="#808080"/>
<text x="474" y="336" font-family="Liberation Sans" font-size="12.8" font-weight="normal" fill="#000" text-anchor="start" textLength="29.5" lengthAdjust="spacingAndGlyphs" >Name:</text>
<rect x="558" y="322" width="97" height="20" fill="#fff" />
<rect x="558" y="322" width="97" height="1" fill="#808080" />
<rect x="558" y="322" width="1" height="20" fill="#808080" />
<rect x="558" y="341" width="97" height="1" fill="#ffffff" />
<rect x="654" y="322" width="1" height="20" fill="#ffffff" />
<rect x="559" y="323" width="95" height="1" fill="#404040" />
<rect x="559" y="323" width="1" height="18" fill="#404040" />
<rect x="559" y="340" width="95" height="1" fill="#d4d0c8" />
<rect x="653" y="323" width="1" height="18" fill="#d4d0c8" />
<text x="562" y="335.5" font-family="Liberation Sans" font-size="12.8" font-weight="normal" fill="#000" text-anchor="start" textLength="46" lengthAdjust="spacingAndGlyphs" >Features</text>
<text x="474" y="359" font-family="Liberation Sans" font-size="12.8" font-weight="normal" fill="#000" text-anchor="start" textLength="44" lengthAdjust="spacingAndGlyphs" >Opacity:</text>
<rect x="558" y="345" width="97" height="1" fill="#808080" />
<rect x="558" y="345" width="1" height="20" fill="#808080" />
<rect x="558" y="364" width="97" height="1" fill="#ffffff" />
<rect x="654" y="345" width="1" height="20" fill="#ffffff" />
<rect x="559" y="346" width="95" height="1" fill="#404040" />
<rect x="559" y="346" width="1" height="18" fill="#404040" />
<rect x="559" y="363" width="95" height="1" fill="#d4d0c8" />
<rect x="653" y="346" width="1" height="18" fill="#d4d0c8" />
<rect x="560" y="347" width="93" height="16" fill="url(#chk)" />
<rect x="560" y="347" width="93" height="16" fill="url(#opg)" />
<rect x="652" y="347" width="1" height="1" fill="#d4d0c8" />
<rect x="651" y="347" width="1" height="1" fill="#d4d0c8" />
<rect x="652" y="348" width="1" height="1" fill="#d4d0c8" />
<rect x="652" y="362" width="1" height="1" fill="#d4d0c8" />
<rect x="651" y="362" width="1" height="1" fill="#d4d0c8" />
<rect x="652" y="361" width="1" height="1" fill="#d4d0c8" />
<rect x="653" y="346" width="1" height="18" fill="#d4d0c8" />
<text x="607" y="359.5" font-family="Liberation Sans" font-size="12.8" font-weight="normal" fill="#fff" text-anchor="middle" textLength="28.5" lengthAdjust="spacingAndGlyphs" stroke="#000" stroke-width="1.6" paint-order="stroke">100%</text>
<rect x="475" y="371" width="13" height="13" fill="#fff" />
<rect x="475" y="371" width="13" height="1" fill="#808080" />
<rect x="475" y="371" width="1" height="13" fill="#808080" />
<rect x="475" y="383" width="13" height="1" fill="#ffffff" />
<rect x="487" y="371" width="1" height="13" fill="#ffffff" />
<rect x="476" y="372" width="11" height="1" fill="#404040" />
<rect x="476" y="372" width="1" height="11" fill="#404040" />
<rect x="476" y="382" width="11" height="1" fill="#d4d0c8" />
<rect x="486" y="372" width="1" height="11" fill="#d4d0c8" />
<path d="M478.2 377 L480.5 379.6 L484.6 374.2" fill="none" stroke="#000" stroke-width="1.9"/>
<text x="493" y="382" font-family="Liberation Sans" font-size="12.8" font-weight="normal" fill="#000" text-anchor="start" textLength="37" lengthAdjust="spacingAndGlyphs" >Visible</text>
<text x="474" y="433" font-family="Liberation Sans" font-size="12.8" font-weight="normal" fill="#000" text-anchor="start" textLength="29" lengthAdjust="spacingAndGlyphs" >Mode:</text>
<rect x="538" y="419" width="117" height="20" fill="#fff" />
<rect x="538" y="419" width="117" height="1" fill="#808080" />
<rect x="538" y="419" width="1" height="20" fill="#808080" />
<rect x="538" y="438" width="117" height="1" fill="#ffffff" />
<rect x="654" y="419" width="1" height="20" fill="#ffffff" />
<rect x="539" y="420" width="115" height="1" fill="#404040" />
<rect x="539" y="420" width="1" height="18" fill="#404040" />
<rect x="539" y="437" width="115" height="1" fill="#d4d0c8" />
<rect x="653" y="420" width="1" height="18" fill="#d4d0c8" />
<rect x="638" y="421" width="15" height="16" fill="#d4d0c8" />
<rect x="638" y="421" width="15" height="1" fill="#d4d0c8" />
<rect x="638" y="421" width="1" height="16" fill="#d4d0c8" />
<rect x="638" y="436" width="15" height="1" fill="#404040" />
<rect x="652" y="421" width="1" height="16" fill="#404040" />
<rect x="639" y="422" width="13" height="1" fill="#ffffff" />
<rect x="639" y="422" width="1" height="14" fill="#ffffff" />
<rect x="639" y="435" width="13" height="1" fill="#808080" />
<rect x="651" y="422" width="1" height="14" fill="#808080" />
<path d="M641.8 428 H648.6 L645.2 431.4 Z" fill="#000"/>
<text x="542" y="433" font-family="Liberation Sans" font-size="12.8" font-weight="normal" fill="#000" text-anchor="start" textLength="36" lengthAdjust="spacingAndGlyphs" >Normal</text>
<text x="474" y="456" font-family="Liberation Sans" font-size="12.8" font-weight="normal" fill="#000" text-anchor="start" textLength="24" lengthAdjust="spacingAndGlyphs" >Size:</text>
<rect x="538" y="442" width="34" height="20" fill="#fff" />
<rect x="538" y="442" width="34" height="1" fill="#808080" />
<rect x="538" y="442" width="1" height="20" fill="#808080" />
<rect x="538" y="461" width="34" height="1" fill="#ffffff" />
<rect x="571" y="442" width="1" height="20" fill="#ffffff" />
<rect x="539" y="443" width="32" height="1" fill="#404040" />
<rect x="539" y="443" width="1" height="18" fill="#404040" />
<rect x="539" y="460" width="32" height="1" fill="#d4d0c8" />
<rect x="570" y="443" width="1" height="18" fill="#d4d0c8" />
<text x="541.5" y="455" font-family="Liberation Sans" font-size="12.5" font-weight="normal" fill="#000" text-anchor="start" textLength="26.5" lengthAdjust="spacingAndGlyphs" >20px</text>
<rect x="572" y="442" width="1" height="20" fill="#808080" />
<rect x="573" y="442" width="1" height="19" fill="#404040" />
<rect x="573" y="442" width="4" height="1" fill="#404040" />
<rect x="574" y="443" width="3" height="18" fill="#7a3a22" />
<rect x="577" y="442" width="1" height="20" fill="#ffffff" />
<rect x="572" y="461" width="6" height="1" fill="#ffffff" />
<rect x="578" y="442" width="5" height="20" fill="#d4d0c8" />
<rect x="578" y="461" width="5" height="1" fill="#404040" />
<rect x="579" y="446" width="2" height="1" fill="#808080" />
<rect x="579" y="447" width="1" height="1" fill="#808080" />
<rect x="580" y="447" width="1" height="1" fill="#ffffff" />
<rect x="579" y="449" width="2" height="1" fill="#808080" />
<rect x="579" y="450" width="1" height="1" fill="#808080" />
<rect x="580" y="450" width="1" height="1" fill="#ffffff" />
<rect x="579" y="452" width="2" height="1" fill="#808080" />
<rect x="579" y="453" width="1" height="1" fill="#808080" />
<rect x="580" y="453" width="1" height="1" fill="#ffffff" />
<rect x="579" y="455" width="2" height="1" fill="#808080" />
<rect x="579" y="456" width="1" height="1" fill="#808080" />
<rect x="580" y="456" width="1" height="1" fill="#ffffff" />
<rect x="582" y="442" width="1" height="20" fill="#808080" />
<rect x="583" y="442" width="1" height="19" fill="#404040" />
<rect x="583" y="442" width="72" height="1" fill="#404040" />
<rect x="584" y="443" width="70" height="18" fill="#fff" />
<rect x="654" y="442" width="1" height="20" fill="#ffffff" />
<rect x="582" y="461" width="73" height="1" fill="#ffffff" />
<text x="474" y="479" font-family="Liberation Sans" font-size="12.8" font-weight="normal" fill="#000" text-anchor="start" textLength="50" lengthAdjust="spacingAndGlyphs" >Hardness:</text>
<rect x="538" y="465" width="34" height="20" fill="#fff" />
<rect x="538" y="465" width="34" height="1" fill="#808080" />
<rect x="538" y="465" width="1" height="20" fill="#808080" />
<rect x="538" y="484" width="34" height="1" fill="#ffffff" />
<rect x="571" y="465" width="1" height="20" fill="#ffffff" />
<rect x="539" y="466" width="32" height="1" fill="#404040" />
<rect x="539" y="466" width="1" height="18" fill="#404040" />
<rect x="539" y="483" width="32" height="1" fill="#d4d0c8" />
<rect x="570" y="466" width="1" height="18" fill="#d4d0c8" />
<text x="541.5" y="478" font-family="Liberation Sans" font-size="12.5" font-weight="normal" fill="#000" text-anchor="start" textLength="23.5" lengthAdjust="spacingAndGlyphs" >80%</text>
<rect x="572" y="465" width="1" height="20" fill="#808080" />
<rect x="573" y="465" width="1" height="19" fill="#404040" />
<rect x="573" y="465" width="59" height="1" fill="#404040" />
<rect x="574" y="466" width="58" height="18" fill="url(#hg)" />
<rect x="632" y="465" width="1" height="20" fill="#ffffff" />
<rect x="572" y="484" width="61" height="1" fill="#ffffff" />
<rect x="633" y="465" width="5" height="20" fill="#d4d0c8" />
<rect x="633" y="484" width="5" height="1" fill="#404040" />
<rect x="634" y="469" width="2" height="1" fill="#808080" />
<rect x="634" y="470" width="1" height="1" fill="#808080" />
<rect x="635" y="470" width="1" height="1" fill="#ffffff" />
<rect x="634" y="472" width="2" height="1" fill="#808080" />
<rect x="634" y="473" width="1" height="1" fill="#808080" />
<rect x="635" y="473" width="1" height="1" fill="#ffffff" />
<rect x="634" y="475" width="2" height="1" fill="#808080" />
<rect x="634" y="476" width="1" height="1" fill="#808080" />
<rect x="635" y="476" width="1" height="1" fill="#ffffff" />
<rect x="634" y="478" width="2" height="1" fill="#808080" />
<rect x="634" y="479" width="1" height="1" fill="#808080" />
<rect x="635" y="479" width="1" height="1" fill="#ffffff" />
<rect x="637" y="465" width="1" height="20" fill="#808080" />
<rect x="638" y="465" width="1" height="19" fill="#404040" />
<rect x="638" y="465" width="17" height="1" fill="#404040" />
<rect x="639" y="466" width="15" height="18" fill="#fff" />
<rect x="654" y="465" width="1" height="20" fill="#ffffff" />
<rect x="637" y="484" width="18" height="1" fill="#ffffff" /></svg></body></html>
